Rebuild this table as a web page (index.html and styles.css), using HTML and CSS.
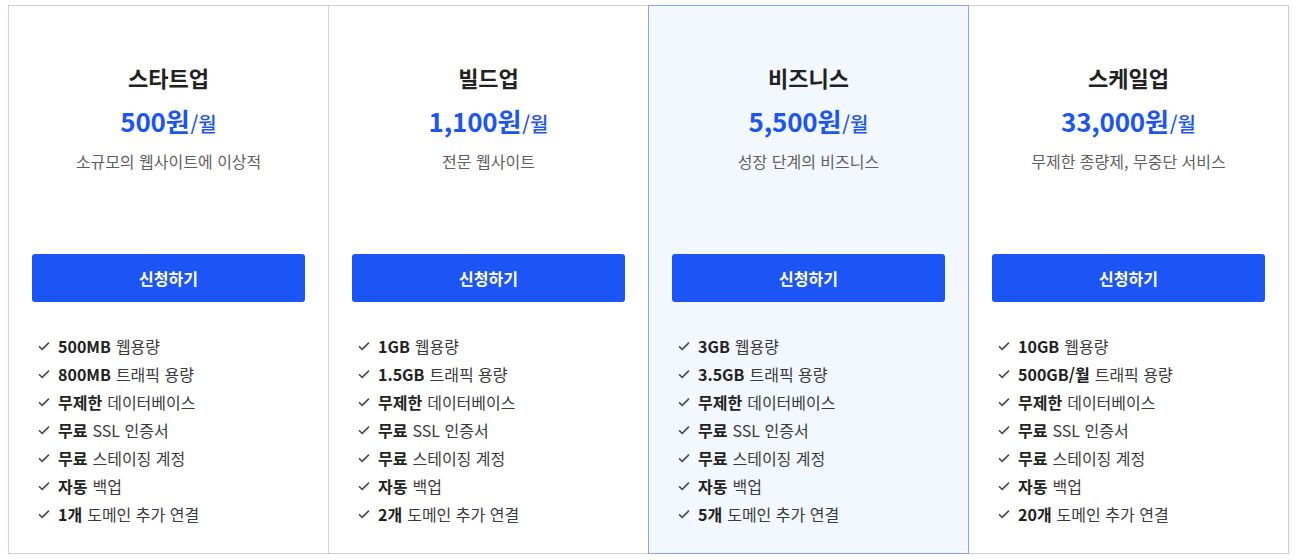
FILE: index.html
```html
<!DOCTYPE html>
<html lang="ko">
<head>
<meta charset="utf-8">
<title>요금제</title>
<link rel="stylesheet" href="styles.css">
</head>
<body>
<div class="plans">
  <section class="plan">
    <div class="head">
      <h2 class="name">스타트업</h2>
      <p class="price"><span class="amount">500원</span><span class="per">/월</span></p>
      <p class="desc">소규모의 웹사이트에 이상적</p>
    </div>
    <button class="cta">신청하기</button>
    <ul class="features">
      <li><svg class="chk" viewBox="0 0 12 10"><polyline points="1,5.2 4.2,8.4 11,1.6"/></svg><b>500MB</b> 웹용량</li>
      <li><svg class="chk" viewBox="0 0 12 10"><polyline points="1,5.2 4.2,8.4 11,1.6"/></svg><b>800MB</b> 트래픽 용량</li>
      <li><svg class="chk" viewBox="0 0 12 10"><polyline points="1,5.2 4.2,8.4 11,1.6"/></svg><b>무제한</b> 데이터베이스</li>
      <li><svg class="chk" viewBox="0 0 12 10"><polyline points="1,5.2 4.2,8.4 11,1.6"/></svg><b>무료</b> SSL 인증서</li>
      <li><svg class="chk" viewBox="0 0 12 10"><polyline points="1,5.2 4.2,8.4 11,1.6"/></svg><b>무료</b> 스테이징 계정</li>
      <li><svg class="chk" viewBox="0 0 12 10"><polyline points="1,5.2 4.2,8.4 11,1.6"/></svg><b>자동</b> 백업</li>
      <li><svg class="chk" viewBox="0 0 12 10"><polyline points="1,5.2 4.2,8.4 11,1.6"/></svg><b>1개</b> 도메인 추가 연결</li>
    </ul>
  </section>
  <section class="plan">
    <div class="head">
      <h2 class="name">빌드업</h2>
      <p class="price"><span class="amount">1,100원</span><span class="per">/월</span></p>
      <p class="desc">전문 웹사이트</p>
    </div>
    <button class="cta">신청하기</button>
    <ul class="features">
      <li><svg class="chk" viewBox="0 0 12 10"><polyline points="1,5.2 4.2,8.4 11,1.6"/></svg><b>1GB</b> 웹용량</li>
      <li><svg class="chk" viewBox="0 0 12 10"><polyline points="1,5.2 4.2,8.4 11,1.6"/></svg><b>1.5GB</b> 트래픽 용량</li>
      <li><svg class="chk" viewBox="0 0 12 10"><polyline points="1,5.2 4.2,8.4 11,1.6"/></svg><b>무제한</b> 데이터베이스</li>
      <li><svg class="chk" viewBox="0 0 12 10"><polyline points="1,5.2 4.2,8.4 11,1.6"/></svg><b>무료</b> SSL 인증서</li>
      <li><svg class="chk" viewBox="0 0 12 10"><polyline points="1,5.2 4.2,8.4 11,1.6"/></svg><b>무료</b> 스테이징 계정</li>
      <li><svg class="chk" viewBox="0 0 12 10"><polyline points="1,5.2 4.2,8.4 11,1.6"/></svg><b>자동</b> 백업</li>
      <li><svg class="chk" viewBox="0 0 12 10"><polyline points="1,5.2 4.2,8.4 11,1.6"/></svg><b>2개</b> 도메인 추가 연결</li>
    </ul>
  </section>
  <section class="plan featured">
    <div class="head">
      <h2 class="name">비즈니스</h2>
      <p class="price"><span class="amount">5,500원</span><span class="per">/월</span></p>
      <p class="desc">성장 단계의 비즈니스</p>
    </div>
    <button class="cta">신청하기</button>
    <ul class="features">
      <li><svg class="chk" viewBox="0 0 12 10"><polyline points="1,5.2 4.2,8.4 11,1.6"/></svg><b>3GB</b> 웹용량</li>
      <li><svg class="chk" viewBox="0 0 12 10"><polyline points="1,5.2 4.2,8.4 11,1.6"/></svg><b>3.5GB</b> 트래픽 용량</li>
      <li><svg class="chk" viewBox="0 0 12 10"><polyline points="1,5.2 4.2,8.4 11,1.6"/></svg><b>무제한</b> 데이터베이스</li>
      <li><svg class="chk" viewBox="0 0 12 10"><polyline points="1,5.2 4.2,8.4 11,1.6"/></svg><b>무료</b> SSL 인증서</li>
      <li><svg class="chk" viewBox="0 0 12 10"><polyline points="1,5.2 4.2,8.4 11,1.6"/></svg><b>무료</b> 스테이징 계정</li>
      <li><svg class="chk" viewBox="0 0 12 10"><polyline points="1,5.2 4.2,8.4 11,1.6"/></svg><b>자동</b> 백업</li>
      <li><svg class="chk" viewBox="0 0 12 10"><polyline points="1,5.2 4.2,8.4 11,1.6"/></svg><b>5개</b> 도메인 추가 연결</li>
    </ul>
  </section>
  <section class="plan">
    <div class="head">
      <h2 class="name">스케일업</h2>
      <p class="price"><span class="amount">33,000원</span><span class="per">/월</span></p>
      <p class="desc">무제한 종량제, 무중단 서비스</p>
    </div>
    <button class="cta">신청하기</button>
    <ul class="features">
      <li><svg class="chk" viewBox="0 0 12 10"><polyline points="1,5.2 4.2,8.4 11,1.6"/></svg><b>10GB</b> 웹용량</li>
      <li><svg class="chk" viewBox="0 0 12 10"><polyline points="1,5.2 4.2,8.4 11,1.6"/></svg><b>500GB/월</b> 트래픽 용량</li>
      <li><svg class="chk" viewBox="0 0 12 10"><polyline points="1,5.2 4.2,8.4 11,1.6"/></svg><b>무제한</b> 데이터베이스</li>
      <li><svg class="chk" viewBox="0 0 12 10"><polyline points="1,5.2 4.2,8.4 11,1.6"/></svg><b>무료</b> SSL 인증서</li>
      <li><svg class="chk" viewBox="0 0 12 10"><polyline points="1,5.2 4.2,8.4 11,1.6"/></svg><b>무료</b> 스테이징 계정</li>
      <li><svg class="chk" viewBox="0 0 12 10"><polyline points="1,5.2 4.2,8.4 11,1.6"/></svg><b>자동</b> 백업</li>
      <li><svg class="chk" viewBox="0 0 12 10"><polyline points="1,5.2 4.2,8.4 11,1.6"/></svg><b>20개</b> 도메인 추가 연결</li>
    </ul>
  </section>
</div>
</body>
</html>
```

FILE: styles.css
```css
* { box-sizing: border-box; }

html, body {
  margin: 0;
  padding: 0;
  background: #ffffff;
}

body {
  padding: 5px 9px 0 8px;
  font-family: "Noto Sans CJK KR", "Noto Sans", sans-serif;
  color: #333;
}

.plans {
  display: grid;
  grid-template-columns: repeat(4, 320px);
  width: 1281px;
  border: 1px solid #cfcfcf;
  border-left: none;
  background: #fff;
  box-shadow: 2px 2px 6px rgba(0, 0, 0, 0.06);
}

.plan {
  display: flex;
  flex-direction: column;
  padding: 0 23px 25px 23px;
  border-left: 1px solid #d4d4d4;
}

.plan:first-child {
  border-left-color: #cfcfcf;
}

.plan.featured {
  position: relative;
  z-index: 1;
  background: #f3f8fe;
  border: 1px solid #80a4ff;
  margin: -1px -1px -1px 0;
}

.head {
  height: 248px;
  padding-top: 56px;
  text-align: center;
}

.name {
  margin: 0;
  font-size: 22px;
  line-height: 31px;
  font-weight: 700;
  color: #222;
}

.price {
  display: flex;
  justify-content: center;
  align-items: baseline;
  height: 40px;
  margin: 8px 0 0;
  line-height: 40px;
  color: #1c55f5;
  font-weight: 700;
}

.amount {
  font-size: 26px;
  letter-spacing: -0.2px;
}

.per {
  font-size: 20px;
  font-weight: 500;
  margin-left: 1px;
}

.desc {
  margin: 9px 0 0;
  font-size: 16px;
  line-height: 22px;
  color: #5f5f5f;
}

.cta {
  display: block;
  width: 100%;
  height: 48px;
  border: none;
  border-radius: 3px;
  background: #1b55f5;
  color: #fff;
  font-family: inherit;
  font-size: 16px;
  font-weight: 700;
  cursor: pointer;
}

.features {
  list-style: none;
  margin: 30px 0 0;
  padding: 0 0 0 6px;
}

.features li {
  display: flex;
  align-items: center;
  height: 28px;
  font-size: 16px;
  color: #3a3a3a;
  white-space: nowrap;
}

.features b {
  font-weight: 700;
  margin-right: 5px;
  color: #222;
}

.chk {
  width: 12px;
  height: 10px;
  margin-right: 8px;
  fill: none;
  stroke: #484848;
  stroke-width: 1.5;
}
```
